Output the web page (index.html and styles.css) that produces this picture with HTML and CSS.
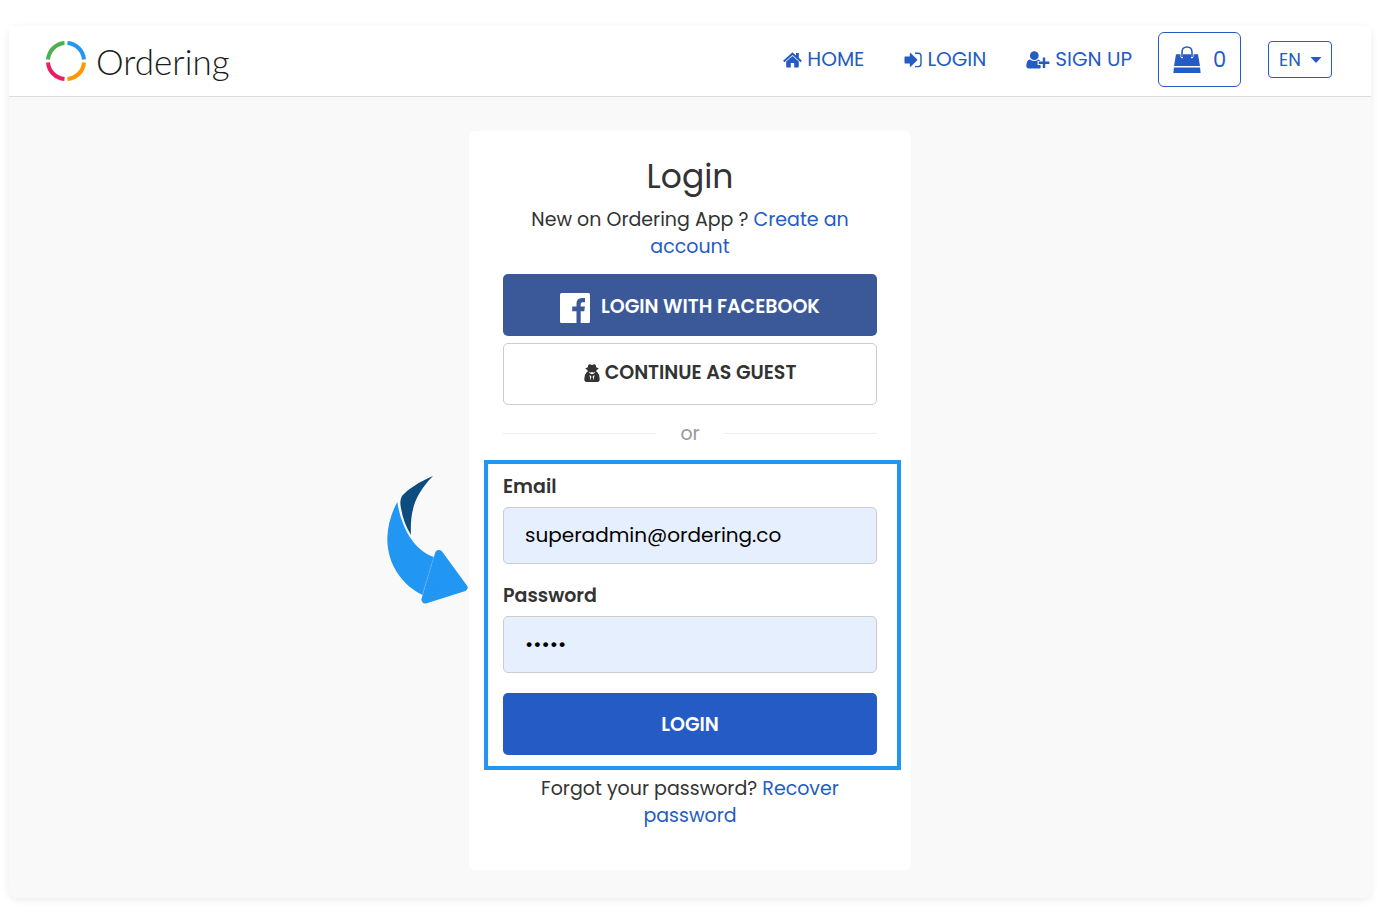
FILE: index.html
```html
<!DOCTYPE html>
<html lang="en">
<head>
  <meta charset="utf-8">
  <meta name="viewport" content="width=device-width,initial-scale=1">
  <title>Ordering - Login</title>
  <link rel="stylesheet" href="styles.css">
</head>
<body>
  <div class="page">
    <header class="header">
      <a href="#" class="logo">
        <svg width="40" height="40" viewBox="0 0 40 40" fill="none" stroke-width="4">
          <path d="M2 18.500A18 18 0 0 1 18.500 2" stroke="#4caf50"/>
          <path d="M21.500 2A18 18 0 0 1 38 18.500" stroke="#2196f3"/>
          <path d="M38 21.500A18 18 0 0 1 21.500 38" stroke="#ff9800"/>
          <path d="M18.500 38A18 18 0 0 1 2 21.500" stroke="#e91e63"/>
        </svg>
        <span>Ordering</span>
      </a>
      <nav class="nav">
        <a href="#">
          <svg width="19" height="16" viewBox="0 0 19 16" fill="currentColor">
            <path d="M9.500 0.300L13 3.400V1H15.800V5.800L18.900 8.700L17.600 10.200L9.500 3L1.400 10.200L0.100 8.700Z"/>
            <path d="M9.500 4L15.800 9.600V14.800Q15.800 15.600 15 15.600H11.200V11H7.800V15.600H4Q3.200 15.600 3.200 14.800V9.600Z"/>
          </svg>
          HOME
        </a>
        <a href="#">
          <svg width="18" height="16" viewBox="0 0 18 16">
            <path d="M0.500 5Q0.500 4.400 1.100 4.400H5.800V1.600Q6 0.700 6.900 1.300L13 7.300Q13.500 7.900 13 8.500L6.900 14.500Q6 15.100 5.800 14.200V11.400H1.100Q0.500 11.400 0.500 10.800Z" fill="currentColor"/>
            <path d="M11 1.200H14.200Q17 1.200 17 4V11.800Q17 14.600 14.200 14.600H11" fill="none" stroke="currentColor" stroke-width="1.400"/>
          </svg>
          LOGIN
        </a>
        <a href="#">
          <svg width="24" height="18" viewBox="0 0 24 18" fill="currentColor">
            <circle cx="8.300" cy="4.700" r="4.400"/>
            <path d="M4 8.400Q8.300 11.800 12.600 8.400L13.800 9.200V10H11.600V14H14.600V17Q14 17.600 13 17.600H3Q0.300 17.600 0.300 14.600Q0.400 9 4 8.400Z"/>
            <path d="M16.800 6.600H19.200V10.500H23.400V13H19.200V17H16.800V13H12.700V10.500H16.800Z"/>
          </svg>
          SIGN UP
        </a>
      </nav>
      <button type="button" class="cart" aria-label="Cart">
        <svg width="28" height="28" viewBox="0 0 28 28">
          <path d="M3 8.200H7.500V10.500A1.800 1.800 0 0 0 10 12V8.200H18V12A1.800 1.800 0 0 0 20.500 10.500V8.200H25L27 20H1Z" fill="currentColor"/>
          <path d="M0.900 21.400H27.100L27.600 27H0.400Z" fill="currentColor"/>
          <path d="M9 11V6.200Q9 1 14 1T19 6.200V11" fill="none" stroke="currentColor" stroke-width="1.600"/>
        </svg>
        <span>0</span>
      </button>
      <div class="lang">
        <select aria-label="Language">
          <option>EN</option>
          <option>ES</option>
        </select>
        <svg width="12" height="6" viewBox="0 0 12 6"><path d="M0.500 0H11.500L6 6Z" fill="currentColor"/></svg>
      </div>
    </header>

    <main class="card">
      <h1>Login</h1>
      <p class="note">New on Ordering App ? <a href="#">Create an account</a></p>
      <button type="button" class="btn btn-facebook">
        <svg width="30" height="30" viewBox="0 0 30 30">
          <rect width="30" height="30" rx="1.500" fill="#fff"/>
          <path d="M16.500 30V18.200H12.200V13.600H16.500V10.500Q16.500 5 22 4.900L25 5V9.200H22.600Q20.700 9.200 20.700 11V13.600H24.900L24.300 18.200H20.700V30Z" fill="#3b5998"/>
        </svg>
        LOGIN WITH FACEBOOK
      </button>
      <button type="button" class="btn btn-guest">
        <svg width="16" height="18" viewBox="0 0 16 18">
          <path d="M4.300 1Q5 0 6.500 0.500L8 1L9.500 0.500Q11 0 11.700 1L12.300 3.500Q14.600 4 14.600 4.700Q14.600 5.400 12.600 5.800L12.400 8H13.200Q15.700 10.500 15.700 15Q15.700 18 13.500 18H2.500Q0.300 18 0.300 15Q0.300 10.500 2.800 8H3.600L3.400 5.800Q1.400 5.400 1.400 4.700Q1.400 4 3.700 3.500Z" fill="#333"/>
          <path d="M4.700 8.100L6.800 8.500L8 8.100L9.200 8.500L11.300 8.100Q10.400 10.200 8 10.200Q5.600 10.200 4.700 8.100ZM5.400 11.200L7.300 12L6.800 16.500ZM10.600 11.200L8.700 12L9.200 16.500Z" fill="#fff"/>
        </svg>
        CONTINUE AS GUEST
      </button>
      <div class="divider">or</div>

      <form class="login-form">
        <svg class="arrow" width="82" height="130" viewBox="0 0 82 130">
          <path d="M46 1C32 7 21 14 15 21C13 25 13 29 14 33C15.500 43 19 52 24 60C23 39 26 21 46 1Z" fill="#0d4c7f"/>
          <path d="M10.300 27C14 51 26 75 47 82L35.500 120C15 110 0 89 0.300 63Q1 44 10.300 27Z" fill="#2196f3"/>
          <path d="M52 79L76.500 112.500L38.500 124.500Z" fill="#2196f3" stroke="#2196f3" stroke-width="8" stroke-linejoin="round"/>
          <path d="M46.500 82L35.500 119" stroke="#64b5f6" stroke-width="0.500"/>
        </svg>
        <label for="email">Email</label>
        <input type="email" id="email" value="superadmin@ordering.co">
        <label for="password">Password</label>
        <input type="password" id="password" value="admin">
        <button type="submit" class="btn btn-login">LOGIN</button>
      </form>

      <p class="note">Forgot your password? <a href="#">Recover password</a></p>
    </main>
  </div>
</body>
</html>
```

FILE: styles.css
```css
* { box-sizing: border-box; }
body { margin: 0; padding: 26px 9px 12px; background: #fff; color: #333; font-family: Poppins, Inter, "Open Sans", sans-serif; font-size: 19px; line-height: 27px; }
a { color: #255bc4; text-decoration: none; }
a:hover { text-decoration: underline; }
svg { flex: none; }

.page { background: #f9f9f9; border-radius: 8px; box-shadow: 0 2px 8px rgba(0, 0, 0, 0.08); padding-bottom: 28px; }

.header { display: flex; align-items: center; height: 71px; padding: 0 39px 3px 37px; background: #fff; border-bottom: 1px solid #ddd; }
.logo { display: flex; align-items: center; gap: 10px; margin-right: auto; padding-top: 3px; color: #1c1c1c; font-family: Lato, sans-serif; font-size: 35px; font-weight: 300; line-height: 40px; }
.nav { display: flex; gap: 40px; margin-right: 26px; font-size: 20px; }
.nav a { display: flex; align-items: center; gap: 5px; }
.cart { display: flex; align-items: center; justify-content: center; gap: 12px; width: 83px; height: 55px; margin-right: 27px; background: #fff; color: #255bc4; border: 1px solid #255bc4; border-radius: 6px; font-family: inherit; font-size: 21px; cursor: pointer; }
.lang { position: relative; color: #255bc4; }
.lang select { display: block; width: 64px; height: 37px; padding: 0 10px; appearance: none; background: #fff; color: #255bc4; border: 1px solid #255bc4; border-radius: 4px; font-family: inherit; font-size: 18px; }
.lang svg { position: absolute; right: 10px; top: 16px; pointer-events: none; }

.card { width: 442px; max-width: 100%; margin: 34px auto 0; padding: 23px 34px 41px; background: #fff; border-radius: 6px; text-align: center; }
h1 { margin: 0 0 7px; font-size: 33px; font-weight: 400; line-height: 45px; }
.note { margin: 0 auto; padding: 0 24px; }

.btn { display: flex; align-items: center; justify-content: center; width: 100%; height: 62px; border: 1px solid transparent; border-radius: 5px; font-family: inherit; font-size: 19px; font-weight: 600; cursor: pointer; }
.btn-facebook { gap: 11px; margin-top: 14px; padding-top: 4px; background: #3b5998; color: #fff; }
.btn-facebook svg { margin-top: 3px; }
.btn-guest { gap: 5px; margin-top: 7px; padding-bottom: 4px; background: #fff; color: #333; border-color: #ccc; }
.btn-login { margin-top: 20px; background: #255bc4; color: #fff; }

.divider { display: flex; align-items: center; gap: 24px; margin: 15px 0 13px; color: #999; }
.divider::before, .divider::after { content: ""; flex: 1; border-top: 1px solid #eee; }

.login-form { position: relative; margin: 0 -24px 5px -19px; padding: 9px 20px 11px 15px; border: 4px solid #2196f3; text-align: left; }
.login-form label { display: block; margin-bottom: 7px; font-weight: 600; }
.login-form input { display: block; width: 100%; height: 57px; padding: 0 21px 2px; background: #e6effe; color: #000; border: 1px solid #ccc; border-radius: 5px; font-family: inherit; font-size: 20px; }
.login-form input + label { margin-top: 18px; }
.arrow { position: absolute; right: 100%; top: 11px; margin-right: 19px; }
```
